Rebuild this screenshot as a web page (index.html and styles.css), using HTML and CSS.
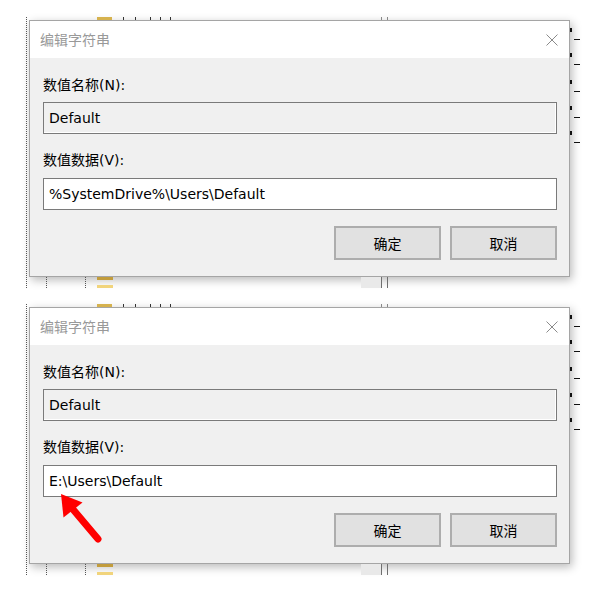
FILE: index.html
```html
<!DOCTYPE html>
<html lang="zh-CN">
<head>
<meta charset="utf-8">
<title>编辑字符串</title>
<link rel="stylesheet" href="styles.css">
</head>
<body>
<div class="page">
  <div class="shot">
    <div class="dialog">
      <div class="titlebar">
        <span class="title">编辑字符串</span>
        <svg class="close" width="12" height="12" viewBox="0 0 12 12"><path d="M0.5 0.5L11.5 11.5M11.5 0.5L0.5 11.5" stroke="#8a8a8a" stroke-width="1" fill="none"/></svg>
      </div>
      <div class="body">
        <div class="label">数值名称(N):</div>
        <div class="field disabled">Default</div>
        <div class="label l2">数值数据(V):</div>
        <div class="field f2">%SystemDrive%\Users\Default</div>
        <div class="buttons"><div class="btn">确定</div><div class="btn">取消</div></div>
      </div>
    </div>
    <div class="deco">
      <i class="dot-v left-dots"></i>
      <i class="dot-v low d1"></i><i class="dot-v low d2"></i>
      <i class="folder-a"></i><i class="folder-b"></i><i class="folder-top"></i>
      <i class="gblock"></i><i class="vline v1"></i><i class="vline v2"></i>
      <i class="tick t1"></i><i class="tick t2"></i><i class="tick t3"></i><i class="tick t4"></i><i class="tick t5"></i><i class="tick t6"></i><i class="tick t7"></i>
      <i class="rg r1"></i><i class="rg r2"></i><i class="rg r3"></i><i class="rg r4"></i><i class="rg r5"></i>
      <i class="rl r1"></i><i class="rl r2"></i><i class="rl r3"></i><i class="rl r4"></i><i class="rl r5"></i>
    </div>
  </div>
  <div class="shot">
    <div class="dialog">
      <div class="titlebar">
        <span class="title">编辑字符串</span>
        <svg class="close" width="12" height="12" viewBox="0 0 12 12"><path d="M0.5 0.5L11.5 11.5M11.5 0.5L0.5 11.5" stroke="#8a8a8a" stroke-width="1" fill="none"/></svg>
      </div>
      <div class="body">
        <div class="label">数值名称(N):</div>
        <div class="field disabled">Default</div>
        <div class="label l2">数值数据(V):</div>
        <div class="field f2">E:\Users\Default</div>
        <div class="buttons"><div class="btn">确定</div><div class="btn">取消</div></div>
      </div>
    </div>
    <div class="deco">
      <i class="dot-v left-dots"></i>
      <i class="dot-v low d1"></i><i class="dot-v low d2"></i>
      <i class="folder-a"></i><i class="folder-b"></i><i class="folder-top"></i>
      <i class="gblock"></i><i class="vline v1"></i><i class="vline v2"></i>
      <i class="tick t1"></i><i class="tick t2"></i><i class="tick t3"></i><i class="tick t4"></i><i class="tick t5"></i><i class="tick t6"></i><i class="tick t7"></i>
      <i class="rg r1"></i><i class="rg r2"></i><i class="rg r3"></i><i class="rg r4"></i><i class="rg r5"></i>
      <i class="rl r1"></i><i class="rl r2"></i><i class="rl r3"></i><i class="rl r4"></i><i class="rl r5"></i>
    </div>
    <svg class="arrow" width="60" height="65" viewBox="0 0 60 65">
      <polygon points="11,10 32.5,18.5 13.5,33.5" fill="#ff0000"/>
      <line x1="21" y1="23" x2="48" y2="55" stroke="#ff0000" stroke-width="7" stroke-linecap="round"/>
    </svg>
  </div>
</div>
</body>
</html>
```

FILE: styles.css
```css
* { box-sizing: border-box; }

body {
  margin: 0;
  background: #ffffff;
  font-family: "DejaVu Sans", "Noto Sans CJK SC", sans-serif;
  font-size: 14px;
  color: #000;
}

.page {
  padding: 17px 0 0 20px;
}

.shot {
  position: relative;
  width: 560px;
  height: 271px;
  padding: 3px 0 0 9px;
  margin-bottom: 16px;
}

.dialog {
  position: relative;
  width: 541px;
  height: 257px;
  border: 1px solid #a5a5a5;
  background: #f0f0f0;
  box-shadow: 2px 3px 9px rgba(0, 0, 0, 0.28);
  display: flex;
  flex-direction: column;
  z-index: 1;
}

.titlebar {
  height: 37px;
  background: #ffffff;
  display: flex;
  align-items: center;
  justify-content: space-between;
  padding: 0 11px 0 10px;
}

.title {
  color: #999999;
  font-size: 14px;
  line-height: 20px;
}

.close { display: block; }

.body {
  padding: 17px 12px 0 13px;
}

.label {
  height: 20px;
  line-height: 20px;
}

.l2 { margin-top: 16px; }

.field {
  margin-top: 7px;
  height: 32px;
  border: 1px solid #7a7a7a;
  background: #ffffff;
  padding-left: 5px;
  line-height: 30px;
  white-space: nowrap;
}

.field.disabled {
  background: #f0f0f0;
  box-shadow: inset -1px -1px 0 #ffffff;
}

.field.f2 { margin-top: 8px; }

.buttons {
  margin-top: 16px;
  display: flex;
  justify-content: flex-end;
  gap: 9px;
}

.btn {
  width: 107px;
  height: 34px;
  border: 2px solid #adadad;
  background: #e1e1e1;
  display: flex;
  align-items: center;
  justify-content: center;
  font-size: 14px;
}

/* backdrop fragments of the registry editor */
.deco {
  position: absolute;
  inset: 0;
  z-index: 2;
  pointer-events: none;
}

.deco i { position: absolute; display: block; }

.dot-v { border-left: 1px dotted #555; width: 1px; }
.left-dots { left: 6px; top: 0; height: 271px; }
.low { top: 260px; height: 11px; }
.d1 { left: 26px; }
.d2 { left: 65px; }

.folder-a { left: 77px; top: 260px; width: 16px; height: 3px; background: #c29c3c; }
.folder-b { left: 77px; top: 268px; width: 16px; height: 3px; background: #f1d47c; }
.folder-top { left: 77px; top: 0; width: 15px; height: 3px; background: #d6b24e; }

.gblock { left: 341px; top: 260px; width: 20px; height: 11px; background: #e9e9e9; }
.vline { top: 260px; width: 1px; height: 11px; background: #6f6f6f; }
.v1 { left: 361px; }
.v2 { left: 367px; }

.tick { top: 0; width: 1px; height: 3px; background: #333; }
.t1 { left: 103px; }
.t2 { left: 115px; }
.t3 { left: 130px; }
.t4 { left: 140px; }
.t5 { left: 150px; }
.t6 { left: 361px; background: #888; }
.t7 { left: 367px; background: #888; }

.rg { left: 550px; width: 2px; height: 4px; background: #111; }
.rl { left: 554px; width: 6px; height: 1px; background: #111; }
.rg.r1 { top: 11px; } .rl.r1 { top: 22px; }
.rg.r2 { top: 36px; } .rl.r2 { top: 47px; }
.rg.r3 { top: 63px; } .rl.r3 { top: 74px; }
.rg.r4 { top: 89px; } .rl.r4 { top: 100px; }
.rg.r5 { top: 114px; } .rl.r5 { top: 125px; }

.arrow {
  position: absolute;
  left: 30px;
  top: 180px;
  z-index: 3;
}
```
